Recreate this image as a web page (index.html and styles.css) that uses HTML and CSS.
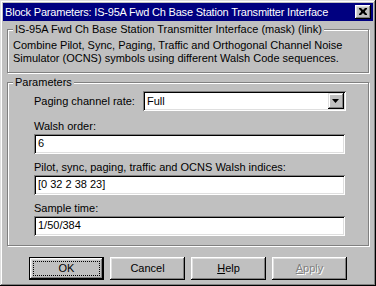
FILE: index.html
```html
<!DOCTYPE html>
<html lang="en">
<head>
  <meta charset="UTF-8">
  <title>Block Parameters</title>
  <link rel="stylesheet" href="styles.css">
</head>
<body>
  <div class="window">
    <div class="titlebar">
      <span class="title">Block Parameters: IS-95A Fwd Ch Base Station Transmitter Interface</span>
      <button class="close-btn" title="Close">
        <svg viewBox="0 0 8 7" width="8" height="7">
          <path d="M0 0h2l2 2 2-2h2v1l-2 2v1l2 2v1h-2l-2-2-2 2h-2v-1l2-2v-1l-2-2z" fill="#000"/>
        </svg>
      </button>
    </div>
    <div class="content">
      <fieldset class="group desc-group">
        <legend>IS-95A Fwd Ch Base Station Transmitter Interface (mask) (link)</legend>
        <p class="desc">Combine Pilot, Sync, Paging, Traffic and Orthogonal Channel Noise<br>Simulator (OCNS) symbols using different Walsh Code sequences.</p>
      </fieldset>
      <fieldset class="group params">
        <legend>Parameters</legend>
        <div class="params-body">
          <div class="inline-row">
            <label class="inline-label">Paging channel rate:</label>
            <div class="select">
              <span class="select-value">Full</span>
              <span class="drop-btn">
                <svg viewBox="0 0 7 4" width="7" height="4"><path d="M0 0h7l-3.5 4z" fill="#000"/></svg>
              </span>
            </div>
          </div>
          <label class="field-label first">Walsh order:</label>
          <div class="field">6</div>
          <label class="field-label">Pilot, sync, paging, traffic and OCNS Walsh indices:</label>
          <div class="field">[0 32 2 38 23]</div>
          <label class="field-label">Sample time:</label>
          <div class="field">1/50/384</div>
        </div>
      </fieldset>
      <div class="buttons">
        <button class="btn default"><span class="focus">OK</span></button>
        <button class="btn">Cancel</button>
        <button class="btn"><u>H</u>elp</button>
        <button class="btn disabled"><u>A</u>pply</button>
      </div>
    </div>
  </div>
</body>
</html>
```

FILE: styles.css
```css
body {
  margin: 0;
  background: #c0c0c0;
  font-family: "Liberation Sans", Arial, sans-serif;
  font-size: 11px;
  line-height: 13px;
  color: #000;
}
.window {
  width: 376px; height: 286px;
  box-sizing: border-box;
  padding: 3px;
  background: #c0c0c0;
  box-shadow: inset -1px -1px #000, inset 1px 1px #dfdfdf, inset -2px -2px #808080, inset 2px 2px #fff;
  display: flex; flex-direction: column;
}
.titlebar {
  height: 18px;
  background: #000080; color: #fff;
  display: flex; align-items: center; justify-content: space-between;
  padding: 0 2px 0 2px;
}
.title { font-size: 11px; white-space: nowrap; letter-spacing: -0.2px; }
.close-btn {
  width: 16px; height: 14px; padding: 0; margin: 0;
  border: none; background: #c0c0c0;
  box-shadow: inset -1px -1px #000, inset 1px 1px #fff, inset -2px -2px #808080, inset 2px 2px #dfdfdf;
  display: flex; align-items: center; justify-content: center;
}
.close-btn svg { margin: 0 1px 1px 0; }
.content { padding: 2px 4px 0 4px; }
.group {
  margin: 0;
  border: 1px solid #808080;
  box-shadow: inset 1px 1px #fff, 1px 1px #fff;
  padding: 3px 5px 7px 5px;
}
.group legend {
  padding: 0 2px;
  background: #c0c0c0;
  line-height: 13px;
}
.desc { margin: 0; white-space: nowrap; }
.params { margin-top: 3px; padding: 2px 5px 9px 5px; }
.params-body { padding: 0 17px 0 21px; }
.inline-row { display: flex; align-items: center; justify-content: space-between; }
.inline-label { padding-top: 1px; }
.select, .field {
  box-sizing: border-box; height: 20px;
  background: #fff;
  box-shadow: inset 1px 1px #808080, inset -1px -1px #fff, inset 2px 2px #000, inset -2px -2px #dfdfdf;
}
.select {
  width: 203px;
  display: flex; align-items: center; justify-content: space-between;
  padding: 2px;
}
.select-value { padding-left: 2px; }
.drop-btn {
  width: 16px; height: 16px; box-sizing: border-box;
  background: #c0c0c0;
  box-shadow: inset -1px -1px #000, inset 1px 1px #dfdfdf, inset -2px -2px #808080, inset 2px 2px #fff;
  display: flex; align-items: center; justify-content: center;
}
.drop-btn svg { margin: 0 1px 1px 0; }
.field {
  width: 311px;
  padding: 3px 4px;
  margin-top: 1px;
}
.field-label { display: block; margin-top: 7px; }
.field-label.first { margin-top: 9px; }
.buttons {
  display: flex; justify-content: center; gap: 6px;
  margin-top: 11px;
}
.btn {
  width: 75px; height: 23px;
  padding: 0; margin: 0;
  border: none; background: #c0c0c0;
  font: inherit; color: #000;
  box-shadow: inset -1px -1px #000, inset 1px 1px #fff, inset -2px -2px #808080, inset 2px 2px #dfdfdf;
}
.btn.default {
  box-shadow: inset 0 0 0 1px #000, inset -2px -2px #000, inset 2px 2px #fff, inset -3px -3px #808080, inset 3px 3px #dfdfdf;
  display: flex; align-items: center; justify-content: center;
}
.focus {
  display: flex; align-items: center; justify-content: center;
  width: 65px; height: 13px;
  outline: 1px dotted #000;
}
.btn.disabled { color: #808080; text-shadow: 1px 1px #fff; }
```
